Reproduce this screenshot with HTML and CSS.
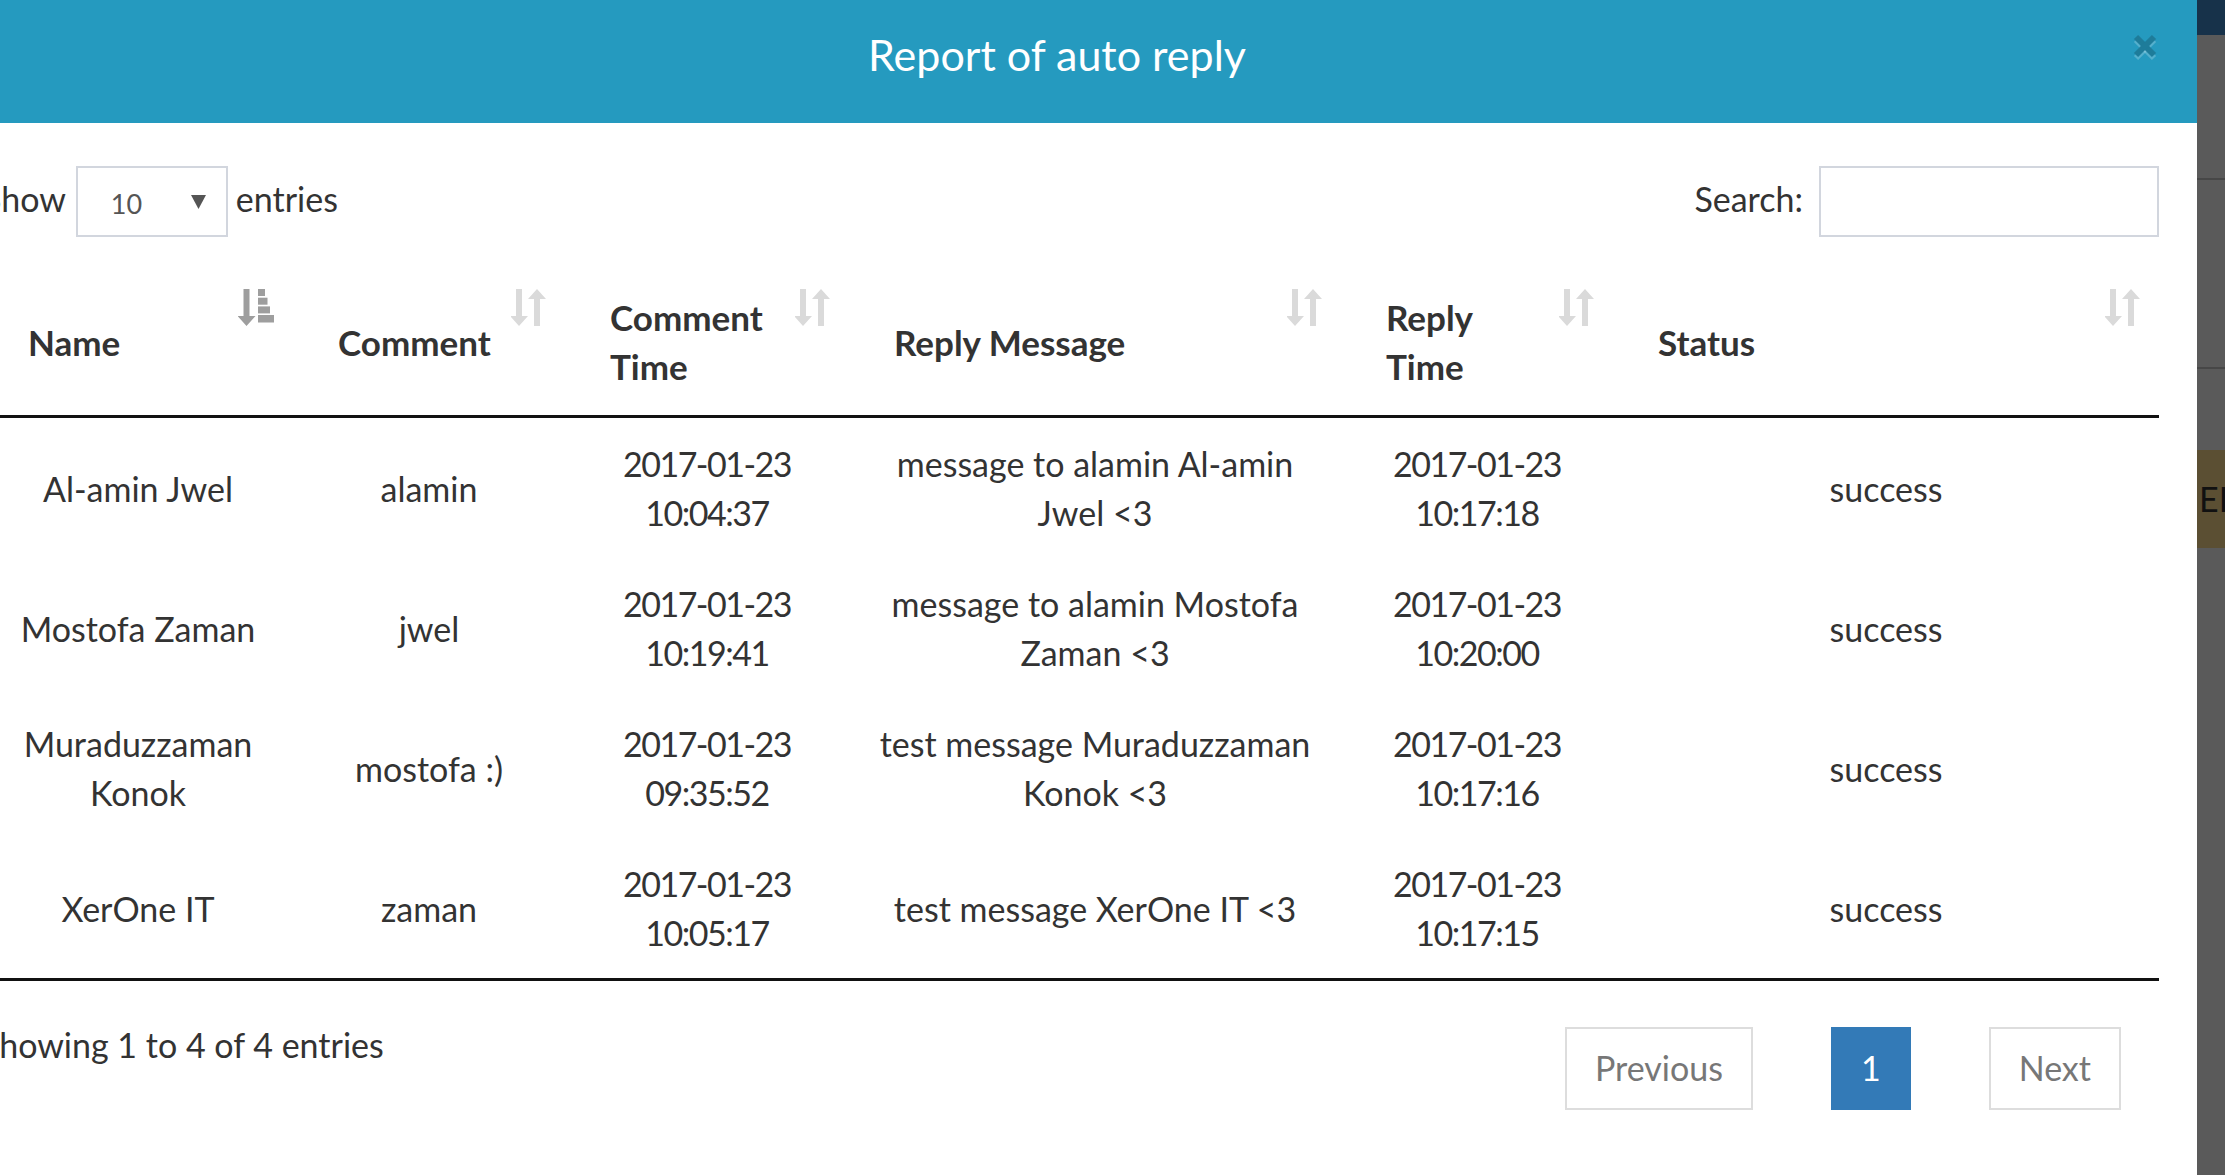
FILE: index.html
```html
<!DOCTYPE html>
<html lang="en">
<head>
<meta charset="utf-8">
<title>Report of auto reply</title>
<link rel="stylesheet" href="styles.css">
</head>
<body>
<div class="screen">
  <div class="modal">
    <div class="modal-header">
      <h4 class="modal-title">Report of auto reply</h4>
      <button class="close" type="button" aria-label="Close">
        <svg width="24" height="27" viewBox="0 0 24 27">
          <g stroke="rgba(255,255,255,0.22)" stroke-width="6" transform="translate(0,3)">
            <line x1="3" y1="3" x2="21" y2="21"/><line x1="21" y1="3" x2="3" y2="21"/>
          </g>
          <g stroke="#1e7c9a" stroke-width="6">
            <line x1="3" y1="3" x2="21" y2="21"/><line x1="21" y1="3" x2="3" y2="21"/>
          </g>
        </svg>
      </button>
    </div>
    <div class="modal-body">
      <div class="dt-top">
        <div class="dt-length">
          <span class="lbl">Show</span>
          <div class="select">
            <span class="select-value">10</span>
            <svg class="select-arrow" width="15" height="15" viewBox="0 0 15 15"><path d="M0 1H15L7.5 15Z" fill="#555"/></svg>
          </div>
          <span class="lbl">entries</span>
        </div>
        <div class="dt-filter">
          <span class="lbl">Search:</span>
          <div class="search-input"></div>
        </div>
      </div>

      <table class="dt">
        <colgroup>
          <col class="c-name"><col class="c-comment"><col class="c-ctime"><col class="c-reply"><col class="c-rtime"><col class="c-status">
        </colgroup>
        <thead>
          <tr>
            <th>Name
              <svg class="sort" width="36" height="37" viewBox="0 0 36 37"><path fill="#9e9e9e" d="M5.5 0H11.5V27H17.5L8.5 37L-0.5 27H5.5Z"/><rect fill="#9e9e9e" x="20" y="0" width="7" height="7"/><rect fill="#9e9e9e" x="20" y="8.7" width="9.5" height="7"/><rect fill="#9e9e9e" x="20" y="17.4" width="12" height="7"/><rect fill="#9e9e9e" x="20" y="26" width="16" height="7.5"/></svg>
            </th>
            <th>Comment
              <svg class="sort" width="35" height="37" viewBox="0 0 35 37"><path fill="#dadada" d="M5 0H11V27H17L8 37L-1 27H5Z M23 37H29V10H35L26 0L17 10H23Z"/></svg>
            </th>
            <th>Comment Time
              <svg class="sort" width="35" height="37" viewBox="0 0 35 37"><path fill="#dadada" d="M5 0H11V27H17L8 37L-1 27H5Z M23 37H29V10H35L26 0L17 10H23Z"/></svg>
            </th>
            <th>Reply Message
              <svg class="sort" width="35" height="37" viewBox="0 0 35 37"><path fill="#dadada" d="M5 0H11V27H17L8 37L-1 27H5Z M23 37H29V10H35L26 0L17 10H23Z"/></svg>
            </th>
            <th>Reply Time
              <svg class="sort" width="35" height="37" viewBox="0 0 35 37"><path fill="#dadada" d="M5 0H11V27H17L8 37L-1 27H5Z M23 37H29V10H35L26 0L17 10H23Z"/></svg>
            </th>
            <th>Status
              <svg class="sort" width="35" height="37" viewBox="0 0 35 37"><path fill="#dadada" d="M5 0H11V27H17L8 37L-1 27H5Z M23 37H29V10H35L26 0L17 10H23Z"/></svg>
            </th>
          </tr>
        </thead>
        <tbody>
          <tr>
            <td>Al-amin Jwel</td>
            <td>alamin</td>
            <td class="num">2017-01-23 10:04:37</td>
            <td>message to alamin Al-amin Jwel &lt;3</td>
            <td class="num">2017-01-23 10:17:18</td>
            <td>success</td>
          </tr>
          <tr>
            <td>Mostofa Zaman</td>
            <td>jwel</td>
            <td class="num">2017-01-23 10:19:41</td>
            <td>message to alamin Mostofa Zaman &lt;3</td>
            <td class="num">2017-01-23 10:20:00</td>
            <td>success</td>
          </tr>
          <tr>
            <td>Muraduzzaman Konok</td>
            <td>mostofa :)</td>
            <td class="num">2017-01-23 09:35:52</td>
            <td>test message Muraduzzaman Konok &lt;3</td>
            <td class="num">2017-01-23 10:17:16</td>
            <td>success</td>
          </tr>
          <tr>
            <td>XerOne IT</td>
            <td>zaman</td>
            <td class="num">2017-01-23 10:05:17</td>
            <td>test message XerOne IT &lt;3</td>
            <td class="num">2017-01-23 10:17:15</td>
            <td>success</td>
          </tr>
        </tbody>
      </table>

      <div class="dt-bottom">
        <div class="dt-info">Showing 1 to 4 of 4 entries</div>
        <div class="dt-paginate">
          <a class="pg-btn">Previous</a>
          <a class="pg-btn pg-active">1</a>
          <a class="pg-btn">Next</a>
        </div>
      </div>
    </div>
  </div>

  <div class="strip">
    <div class="strip-top"></div>
    <div class="strip-seg s1"></div>
    <div class="strip-line"></div>
    <div class="strip-seg s2"></div>
    <div class="strip-line"></div>
    <div class="strip-seg s3"></div>
    <div class="strip-btn">ED</div>
    <div class="strip-seg s4"></div>
  </div>
</div>
</body>
</html>
```

FILE: styles.css
```css
* { box-sizing: border-box; }

html, body {
  margin: 0;
  padding: 0;
  width: 2225px;
  height: 1175px;
  overflow: hidden;
  background: #5a5a5a;
  font-family: "Lato", "Open Sans", sans-serif;
  color: #333;
}

.screen {
  display: flex;
  width: 2225px;
  height: 1175px;
  overflow: hidden;
}

.modal {
  flex: none;
  width: 2252px;
  margin-left: -55px;
  background: #fff;
  display: flex;
  flex-direction: column;
}

.modal-header {
  height: 123px;
  flex: none;
  background: #259abf;
  display: flex;
  align-items: center;
  padding: 0 40px 0 36px;
}

.modal-title {
  flex: 1;
  margin: 0;
  padding-bottom: 13px;
  text-align: center;
  color: #fff;
  font-weight: 400;
  font-size: 43px;
  line-height: 1.2;
}

.close {
  align-self: flex-start;
  margin-top: 34px;
  width: 24px;
  height: 27px;
  padding: 0;
  border: 0;
  background: none;
  display: block;
}
.close svg { display: block; }

.modal-body {
  flex: 1;
  padding: 43px 38px 0 38px;
  font-size: 34px;
  line-height: 49px;
}

.dt-top {
  display: flex;
  justify-content: space-between;
  align-items: center;
  height: 71px;
}

.dt-length, .dt-filter {
  display: flex;
  align-items: center;
}
.lbl { padding-bottom: 6px; }
.dt-length .select { margin: 0 8px 0 10px; }
.dt-filter .search-input { margin-left: 16px; }

.select {
  width: 152px;
  height: 71px;
  border: 2px solid #d2d6de;
  display: flex;
  align-items: center;
  justify-content: space-between;
  padding: 0 20px 0 33px;
}
.select-value {
  font-size: 27px;
  color: #555;
  padding-top: 4px;
}
.select-arrow { display: block; }

.search-input {
  width: 340px;
  height: 71px;
  border: 2px solid #d2d6de;
  background: #fff;
}

.dt {
  width: 2176px;
  table-layout: fixed;
  border-collapse: collapse;
  margin-top: 32px;
  border-bottom: 3px solid #111;
}

.c-name { width: 310px; }
.c-comment { width: 272px; }
.c-ctime { width: 284px; }
.c-reply { width: 492px; }
.c-rtime { width: 272px; }
.c-status { width: 546px; }

.dt th {
  position: relative;
  text-align: left;
  vertical-align: middle;
  font-weight: 700;
  font-size: 35px;
  padding: 24px 62px 24px 45px;
  border-bottom: 3px solid #111;
  white-space: normal;
}

.dt th .sort {
  position: absolute;
  top: 20px;
  right: 19px;
  display: block;
}

.dt td {
  text-align: center;
  vertical-align: middle;
  padding: 21px;
}

.dt td.num { letter-spacing: -1.5px; }

.dt-bottom {
  display: flex;
  justify-content: space-between;
  align-items: flex-start;
}

.dt-info {
  margin-top: 39px;
  margin-left: -2px;
}

.dt-paginate {
  display: flex;
  gap: 78px;
  margin-top: 46px;
  margin-right: 38px;
}

.pg-btn {
  height: 83px;
  padding: 0 28px 2px;
  border: 2px solid #ddd;
  color: #777;
  display: flex;
  align-items: center;
  background: #fff;
}

.pg-active {
  background: #337ab7;
  border-color: #337ab7;
  color: #fff;
}

.strip {
  flex: none;
  width: 28px;
  height: 1175px;
  background: #5a5a5a;
  display: flex;
  flex-direction: column;
  overflow: hidden;
}
.strip-top { height: 35px; background: #17324a; flex: none; }
.strip-seg { flex: none; }
.s1 { height: 143px; }
.s2 { height: 187px; }
.s3 { height: 81px; }
.s4 { flex: 1; }
.strip-line { height: 2px; background: #474747; flex: none; }
.strip-btn {
  flex: none;
  height: 98px;
  background: #5b4f33;
  color: #111;
  font-size: 34px;
  line-height: 98px;
  padding-left: 2px;
  white-space: nowrap;
}
```
